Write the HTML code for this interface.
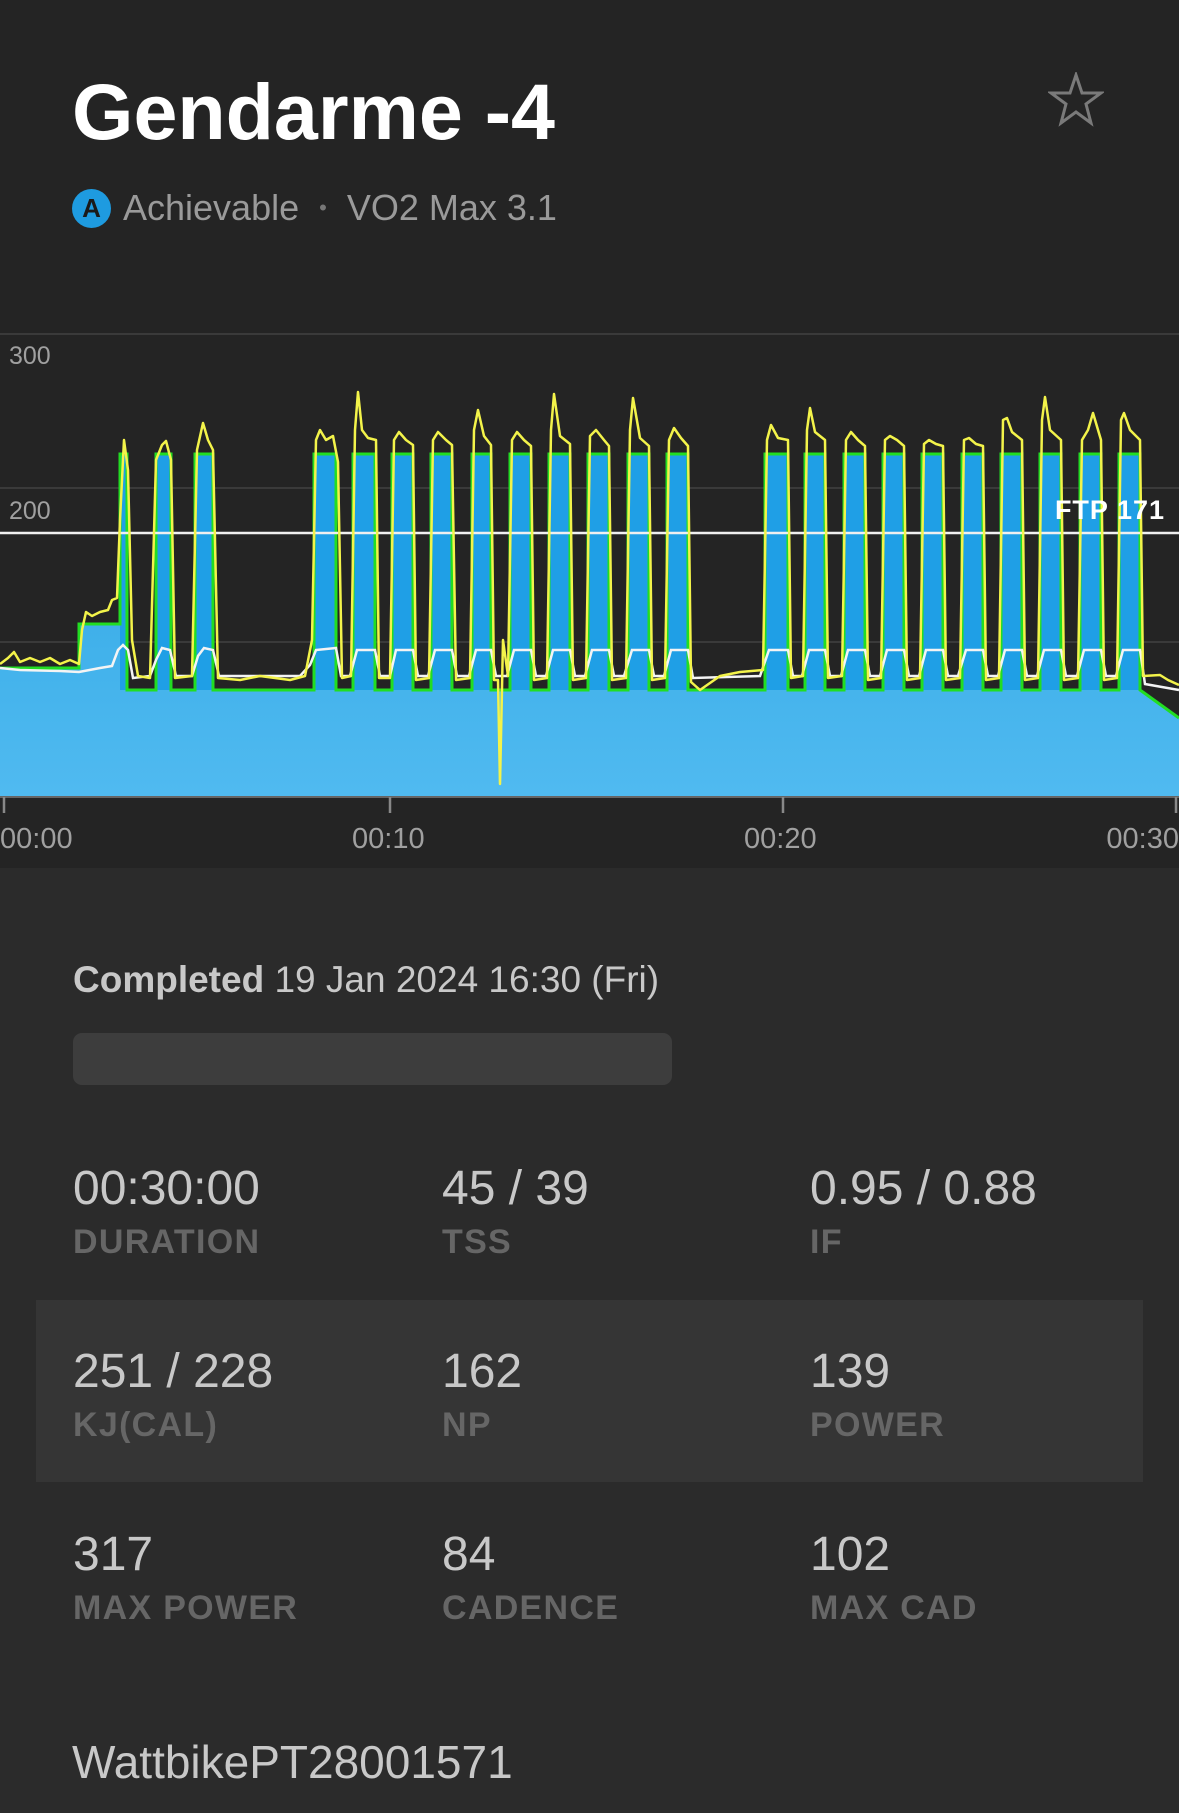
<!DOCTYPE html>
<html><head><meta charset="utf-8"><style>
*{margin:0;padding:0;box-sizing:border-box}
body{width:1179px;height:1813px;background:#2b2b2b;position:relative;overflow:hidden;font-family:"Liberation Sans",sans-serif}
.t{position:absolute;line-height:1;white-space:nowrap}
.v{font-size:48px;color:#c8c8c8}
.l{font-size:34px;font-weight:bold;color:#666;letter-spacing:1.3px}
</style></head><body>
<div style="position:absolute;left:0;top:0;width:1179px;height:868px;background:#242424"></div>
<div class="t" style="left:72px;top:72px;font-size:79px;font-weight:bold;color:#fff">Gendarme -4</div>
<svg style="position:absolute;left:1048px;top:72px" width="56" height="56" viewBox="0 0 56 56"><polygon points="28,3 34,21 53,21 38,32 43,51 28,40 13,51 18,32 3,21 22,21" fill="none" stroke="#7a7a7a" stroke-width="3" stroke-linejoin="miter"/></svg>
<div style="position:absolute;left:72px;top:189px;width:39px;height:39px;border-radius:50%;background:#1e9be0;color:#1a1a1a;font-weight:bold;font-size:26px;text-align:center;line-height:39px">A</div>
<div class="t" style="left:123px;top:190px;font-size:36px;color:#9a9a9a">Achievable&nbsp; <span style="font-size:22px;position:relative;top:-5px;color:#777">•</span>&nbsp; VO2 Max 3.1</div>

<svg style="position:absolute;left:0;top:0" width="1179" height="868" viewBox="0 0 1179 868">
<defs><linearGradient id="g" x1="0" y1="0" x2="0" y2="1"><stop offset="0" stop-color="#3fb0ea"/><stop offset="1" stop-color="#50baf0"/></linearGradient></defs>
<line x1="0" y1="334" x2="1179" y2="334" stroke="#3a3a3a" stroke-width="2"/>
<line x1="0" y1="488" x2="1179" y2="488" stroke="#3a3a3a" stroke-width="2"/>
<line x1="0" y1="642" x2="1179" y2="642" stroke="#3a3a3a" stroke-width="2"/>
<path d="M0,796 V668 H79 V624 H120 V454 H127 V690 H156 V454 H171 V690 H195 V454 H213 V690 H314 V454 H336 V690 H353 V454 H375 V690 H392 V454 H413 V690 H431 V454 H452 V690 H472 V454 H491 V690 H510 V454 H531 V690 H549 V454 H570 V690 H588 V454 H609 V690 H628 V454 H649 V690 H667 V454 H688 V690 H765 V454 H788 V690 H805 V454 H825 V690 H844 V454 H865 V690 H883 V454 H904 V690 H922 V454 H943 V690 H962 V454 H983 V690 H1001 V454 H1022 V690 H1040 V454 H1061 V690 H1080 V454 H1101 V690 H1119 V454 H1140 V690 L1179,718 V796 Z" fill="#1f9fe6"/>
<path d="M0,796 V668 H79 V624 H120 V690 H1140 L1179,718 V796 Z" fill="url(#g)"/>
<path d="M0,668 H79 V624 H120 V454 H127 V690 H156 V454 H171 V690 H195 V454 H213 V690 H314 V454 H336 V690 H353 V454 H375 V690 H392 V454 H413 V690 H431 V454 H452 V690 H472 V454 H491 V690 H510 V454 H531 V690 H549 V454 H570 V690 H588 V454 H609 V690 H628 V454 H649 V690 H667 V454 H688 V690 H765 V454 H788 V690 H805 V454 H825 V690 H844 V454 H865 V690 H883 V454 H904 V690 H922 V454 H943 V690 H962 V454 H983 V690 H1001 V454 H1022 V690 H1040 V454 H1061 V690 H1080 V454 H1101 V690 H1119 V454 H1140 V690 L1179,718" fill="none" stroke="#22dd22" stroke-width="3"/>
<line x1="0" y1="533" x2="1179" y2="533" stroke="#f0f0f0" stroke-width="2.5"/>
<path d="M0,668 L20,670 L60,671 L79,672 L100,668 L112,666 L118,650 L123,645 L128,650 L133,678 L150,676 L156,660 L162,648 L170,650 L176,676 L192,676 L198,656 L204,648 L213,650 L219,676 L300,676 L310,665 L316,650 L336,648 L341,676 L350,676 L357,650 L375,650 L380,676 L390,676 L396,650 L413,650 L418,676 L428,676 L435,650 L452,650 L457,676 L469,676 L476,650 L491,650 L496,676 L507,676 L514,650 L531,650 L536,676 L546,676 L553,650 L570,650 L575,676 L585,676 L592,650 L609,650 L614,676 L624,676 L632,650 L649,650 L654,676 L664,676 L671,650 L688,650 L693,678 L760,676 L769,650 L788,650 L793,676 L802,676 L809,650 L825,650 L830,676 L841,676 L848,650 L865,650 L870,676 L880,676 L887,650 L904,650 L909,676 L919,676 L926,650 L943,650 L948,676 L958,676 L966,650 L983,650 L988,676 L998,676 L1005,650 L1022,650 L1027,676 L1037,676 L1044,650 L1061,650 L1066,676 L1077,676 L1084,650 L1101,650 L1106,676 L1116,676 L1123,650 L1140,650 L1145,684 L1179,690" fill="none" stroke="#f4f4f4" stroke-width="2.5"/>
<path d="M0,664 L8,658 L14,652 L20,662 L30,658 L40,662 L50,658 L60,664 L70,660 L79,664 L82,630 L86,612 L92,616 L100,612 L108,610 L112,600 L117,598 L120,520 L124,440 L128,470 L132,640 L138,676 L150,678 L156,460 L162,445 L166,441 L171,460 L175,678 L192,676 L197,450 L203,423 L208,440 L213,450 L218,678 L240,680 L260,676 L290,680 L305,676 L312,640 L316,440 L320,430 L326,440 L333,436 L338,462 L342,678 L351,676 L355,430 L358,392 L362,430 L368,438 L376,440 L379,678 L390,678 L394,440 L399,432 L406,440 L413,445 L416,680 L429,678 L433,440 L438,432 L446,440 L452,445 L456,680 L470,678 L474,430 L478,410 L484,436 L491,445 L494,680 L498,680 L500,784 L503,640 L508,676 L512,440 L517,432 L524,440 L531,446 L534,680 L547,678 L551,430 L554,394 L560,436 L570,444 L573,680 L586,678 L590,436 L596,430 L604,440 L609,446 L612,680 L626,678 L630,430 L633,398 L640,438 L649,446 L652,680 L665,678 L669,440 L674,428 L681,438 L688,446 L691,682 L700,690 L720,676 L740,672 L763,670 L767,440 L771,425 L778,438 L788,440 L791,678 L803,676 L807,430 L810,408 L815,432 L825,440 L828,678 L842,676 L846,440 L851,432 L858,440 L865,446 L868,680 L881,678 L885,440 L890,436 L897,440 L904,446 L907,680 L920,678 L924,444 L929,440 L936,444 L943,446 L946,680 L960,678 L964,440 L969,438 L976,444 L983,446 L986,680 L999,678 L1003,420 L1007,418 L1012,432 L1022,440 L1025,680 L1038,678 L1042,420 L1045,397 L1050,430 L1061,440 L1064,680 L1078,678 L1082,440 L1088,430 L1093,413 L1101,440 L1104,680 L1117,678 L1121,420 L1124,413 L1130,430 L1140,440 L1143,676 L1160,675 L1168,680 L1179,685" fill="none" stroke="#f3f34a" stroke-width="2.5" stroke-linejoin="round"/>
<line x1="0" y1="797" x2="1179" y2="797" stroke="#666" stroke-width="2"/>
<line x1="4" y1="797" x2="4" y2="813" stroke="#888" stroke-width="2.5"/>
<line x1="390" y1="797" x2="390" y2="813" stroke="#888" stroke-width="2.5"/>
<line x1="783" y1="797" x2="783" y2="813" stroke="#888" stroke-width="2.5"/>
<line x1="1176" y1="797" x2="1176" y2="813" stroke="#888" stroke-width="2.5"/>
</svg>
<div class="t" style="left:9px;top:344px;font-size:25px;color:#a0a0a0">300</div>
<div class="t" style="left:9px;top:499px;font-size:25px;color:#a0a0a0">200</div>
<div class="t" style="right:14px;top:497px;font-size:27px;font-weight:bold;color:#fff;letter-spacing:1px">FTP 171</div>
<div class="t" style="left:0;top:825px;font-size:29px;color:#a0a0a0">00:00</div>
<div class="t" style="left:352px;top:825px;font-size:29px;color:#a0a0a0">00:10</div>
<div class="t" style="left:744px;top:825px;font-size:29px;color:#a0a0a0">00:20</div>
<div class="t" style="right:0;top:825px;font-size:29px;color:#a0a0a0">00:30</div>

<div class="t" style="left:73px;top:961px;font-size:37px;color:#c8c8c8"><b>Completed</b> 19 Jan 2024 16:30 (Fri)</div>
<div style="position:absolute;left:73px;top:1033px;width:599px;height:52px;border-radius:9px;background:#3d3d3d"></div>

<div style="position:absolute;left:36px;top:1300px;width:1107px;height:182px;background:#353535"></div>

<div class="t v" style="left:73px;top:1165px">00:30:00</div>
<div class="t v" style="left:442px;top:1165px">45 / 39</div>
<div class="t v" style="left:810px;top:1165px">0.95 / 0.88</div>
<div class="t l" style="left:73px;top:1225px">DURATION</div>
<div class="t l" style="left:442px;top:1225px">TSS</div>
<div class="t l" style="left:810px;top:1225px">IF</div>

<div class="t v" style="left:73px;top:1348px">251 / 228</div>
<div class="t v" style="left:442px;top:1348px">162</div>
<div class="t v" style="left:810px;top:1348px">139</div>
<div class="t l" style="left:73px;top:1408px">KJ(CAL)</div>
<div class="t l" style="left:442px;top:1408px">NP</div>
<div class="t l" style="left:810px;top:1408px">POWER</div>

<div class="t v" style="left:73px;top:1531px">317</div>
<div class="t v" style="left:442px;top:1531px">84</div>
<div class="t v" style="left:810px;top:1531px">102</div>
<div class="t l" style="left:73px;top:1591px">MAX POWER</div>
<div class="t l" style="left:442px;top:1591px">CADENCE</div>
<div class="t l" style="left:810px;top:1591px">MAX CAD</div>

<div class="t" style="left:72px;top:1739px;font-size:46px;color:#c8c8c8">WattbikePT28001571</div>
</body></html>
